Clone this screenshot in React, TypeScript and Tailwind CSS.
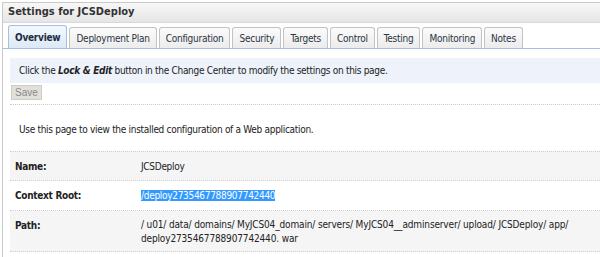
import React from "react";

const tabs = ["Overview", "Deployment Plan", "Configuration", "Security", "Targets", "Control", "Testing", "Monitoring", "Notes"];

export default function App() {
  return (
    <div
      className="w-[600px] h-[257px] overflow-hidden bg-white text-[#222] text-[10px] tracking-[-0.3px]"
      style={{ fontFamily: "'DejaVu Sans Condensed', 'DejaVu Sans', sans-serif" }}
    >
      <div className="ml-[2px] mt-[2px] h-[255px] border-l border-t border-[#c9c9c9] flex flex-col">
        <div className="h-[20px] flex items-center pl-[5px] font-bold text-[11px] tracking-normal text-[#333] bg-gradient-to-b from-[#f7f7f7] to-[#e6e6e6] border-b border-[#d8d8d8]">
          Settings for JCSDeploy
        </div>
        <div className="flex items-end pl-[5px] mt-[3px] h-[23px] border-b border-[#a6bfe0] tracking-[-0.25px]">
          {tabs.map((t, i) => (
            <div
              key={t}
              className={
                i === 0
                  ? "h-[23px] px-[6px] mr-[2px] flex items-center font-bold text-[#1d2c40] rounded-t-[3px] border border-b-0 border-[#a6bfe0] bg-gradient-to-b from-[#f3f8fd] to-[#dce9f6]"
                  : "h-[21px] px-[6px] mr-[2px] flex items-center text-[#2b3442] rounded-t-[3px] border border-b-0 border-[#c3c3c3] bg-gradient-to-b from-[#fbfbfb] to-[#ececec]"
              }
            >
              {t}
            </div>
          ))}
        </div>
        <div className="ml-[7px] mt-[9px] h-[25px] flex items-center pl-[9px] bg-[#edf2fb]">
          Click the&nbsp;<i className="font-bold">Lock &amp; Edit</i>&nbsp;button in the Change Center to modify the settings on this page.
        </div>
        <div className="ml-[8px] mt-[2px]">
          <div className="inline-block w-[31px] h-[15px] leading-[13px] text-center tracking-normal text-[#8a8a8a] bg-[#e2e0da] border border-[#cfcdc6]" style={{ fontFamily: "'Liberation Sans', sans-serif" }}>
            Save
          </div>
        </div>
        <div className="ml-[7px] mt-[4px] border-t border-dotted border-[#c8c8c8]" />
        <div className="pl-[16px] mt-[17px]">Use this page to view the installed configuration of a Web application.</div>
        <div className="ml-[7px] mt-[14px] flex flex-col">
          <div className="flex h-[30px] items-center bg-[#f5f5f5] border-t border-b border-dotted border-[#cfcfcf]">
            <div className="w-[131px] pl-[5px] font-bold">Name:</div>
            <div>JCSDeploy</div>
          </div>
          <div className="flex h-[30px] items-center bg-white border-b border-dotted border-[#cfcfcf]">
            <div className="w-[131px] pl-[5px] font-bold">Context Root:</div>
            <div>
              <span className="bg-[#3399ff] text-white">/deploy2735467788907742440</span>
            </div>
          </div>
          <div className="flex h-[41px] items-start pt-[7px] bg-[#f5f5f5] border-b border-dotted border-[#cfcfcf]">
            <div className="w-[131px] pl-[5px] font-bold">Path:</div>
            <div className="leading-[14px] tracking-[-0.15px]">
              / u01/ data/ domains/ MyJCS04_domain/ servers/ MyJCS04__adminserver/ upload/ JCSDeploy/ app/
              <br />
              deploy2735467788907742440. war
            </div>
          </div>
        </div>
      </div>
    </div>
  );
}
